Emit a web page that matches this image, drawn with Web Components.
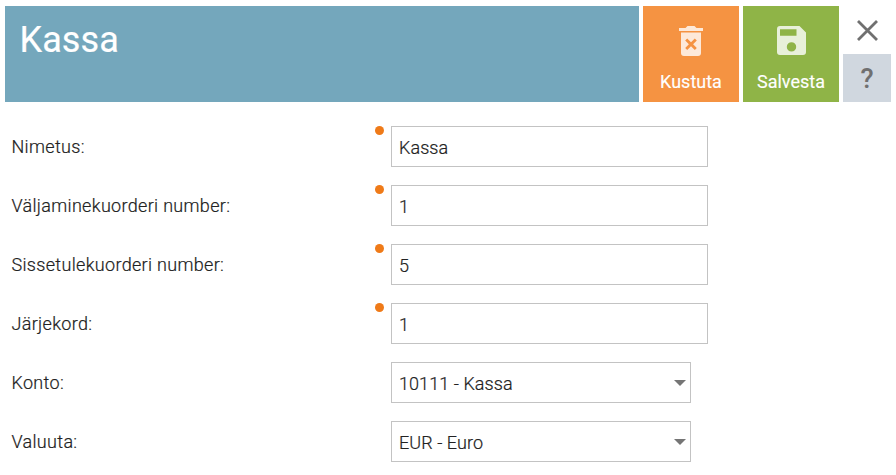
<!DOCTYPE html>
<html lang="et">
<head>
<meta charset="utf-8">
<title>Kassa</title>
<style>
  body {
    margin: 0;
    background: #fff;
    font-family: Roboto, "Liberation Sans", sans-serif;
  }
</style>
</head>
<body>
<cash-page>
  <page-header slot="header" heading="Kassa">
    <tool-button kind="delete">
      <svg slot="icon" width="24" height="30" viewBox="0 0 24 30">
        <path fill-rule="evenodd" fill="currentColor" d="M0 2H6.5L8.5 0H15.5L17.5 2H24V5H0ZM2 6.5H22V27Q22 30 19 30H5Q2 30 2 27ZM8.2 12.5L6.2 14.5L9.9 18.2L6.2 21.9L8.2 23.9L12 20.2L15.8 23.9L17.8 21.9L14.1 18.2L17.8 14.5L15.8 12.5L12 16.2Z"/>
      </svg>
      Kustuta
    </tool-button>
    <tool-button kind="save">
      <svg slot="icon" width="29" height="30" viewBox="0 0 29 30">
        <path fill-rule="evenodd" fill="currentColor" d="M3 0H22.5L29 6.5V26Q29 29 26 29H3Q0 29 0 26V3Q0 0 3 0ZM3 3.2V9.7H19.5V3.2ZM14.5 16.2A4.7 4.7 0 1 0 14.5 25.6A4.7 4.7 0 1 0 14.5 16.2Z"/>
      </svg>
      Salvesta
    </tool-button>
    <window-tools></window-tools>
  </page-header>
  <form-row label="Nimetus:" required><text-field value="Kassa"></text-field></form-row>
  <form-row label="Väljaminekuorderi number:" required><text-field value="1"></text-field></form-row>
  <form-row label="Sissetulekuorderi number:" required><text-field value="5"></text-field></form-row>
  <form-row label="Järjekord:" required><text-field value="1"></text-field></form-row>
  <form-row label="Konto:"><select-field value="10111 - Kassa"></select-field></form-row>
  <form-row label="Valuuta:"><select-field value="EUR - Euro"></select-field></form-row>
</cash-page>

<script>
(() => {
  class BaseElement extends HTMLElement {
    constructor() {
      super();
      this.attachShadow({ mode: 'open' });
    }

    connectedCallback() {
      this.shadowRoot.innerHTML = this.template();
    }
  }

  class CashPage extends BaseElement {
    template() {
      return `
        <style>
          :host { display: block; padding: 6px 5px 0; }
          main { display: flex; flex-direction: column; gap: 18px; padding: 24px 0 0 6.5px; }
        </style>
        <slot name="header"></slot>
        <main><slot></slot></main>
      `;
    }
  }

  class PageHeader extends BaseElement {
    template() {
      return `
        <style>
          :host { display: flex; gap: 4px; height: 96px; }
          h1 {
            flex: 1;
            box-sizing: border-box;
            margin: 0;
            padding: 13px 14.5px;
            background: #74a7bc;
            color: #fff;
            font-size: 36px;
            line-height: 42px;
            font-weight: 400;
            letter-spacing: 0.1px;
            -webkit-text-stroke: 0.2px #fff;
          }
        </style>
        <h1>${this.getAttribute('heading')}</h1>
        <slot></slot>
      `;
    }
  }

  class ToolButton extends BaseElement {
    template() {
      return `
        <style>
          :host { display: block; width: 96px; }
          :host([kind="delete"]) { background: #f59342; }
          :host([kind="save"]) { background: #8fb447; }
          button {
            display: flex;
            flex-direction: column;
            align-items: center;
            gap: 14px;
            width: 100%;
            height: 100%;
            padding: 20px 0 0;
            border: 0;
            background: none;
            color: #fff;
            font: 400 18px/24px Roboto, "Liberation Sans", sans-serif;
            -webkit-text-stroke: 0.15px #fff;
          }
          ::slotted(svg) { display: block; opacity: 0.8; }
        </style>
        <button><slot name="icon"></slot><span><slot></slot></span></button>
      `;
    }
  }

  class WindowTools extends BaseElement {
    template() {
      return `
        <style>
          :host { display: grid; grid-template-rows: 48px 48px; width: 48px; color: #707070; }
          div { display: flex; align-items: center; justify-content: center; }
          .help { background: #d0d7df; font-size: 27px; font-weight: 500; }
          .help span { padding-top: 2px; }
          svg { margin-left: 1px; margin-top: 1px; }
        </style>
        <div class="close">
          <svg width="22" height="22" viewBox="0 0 22 22">
            <path d="M1 1L20 20M20 1L1 20" fill="none" stroke="currentColor" stroke-width="2.8"/>
          </svg>
        </div>
        <div class="help"><span>?</span></div>
      `;
    }
  }

  class FormRow extends BaseElement {
    template() {
      return `
        <style>
          :host {
            display: grid;
            grid-template-columns: 363.5px 16px auto;
            justify-content: start;
            height: 41px;
            color: #222;
          }
          label {
            font-size: 18px;
            line-height: 41px;
            font-weight: 300;
            letter-spacing: 0.32px;
            -webkit-text-stroke: 0.2px #222;
          }
          .dot { width: 9px; height: 9px; border-radius: 50%; background: #ef7a18; }
        </style>
        <label>${this.getAttribute('label')}</label>
        <span>${this.hasAttribute('required') ? '<div class="dot"></div>' : ''}</span>
        <slot></slot>
      `;
    }
  }

  const fieldStyle = `
    :host {
      display: flex;
      align-items: center;
      box-sizing: border-box;
      height: 41px;
      padding: 2px 4px 0 7px;
      border: 1px solid #c3c3c3;
      background: #fff;
      color: #222;
      font-size: 18px;
      font-weight: 300;
      letter-spacing: 0.07px;
      -webkit-text-stroke: 0.2px #222;
    }
  `;

  class TextField extends BaseElement {
    template() {
      return `
        <style>${fieldStyle} :host { width: 317px; }</style>
        <span>${this.getAttribute('value')}</span>
      `;
    }
  }

  class SelectField extends BaseElement {
    template() {
      return `
        <style>
          ${fieldStyle}
          :host { width: 300px; justify-content: space-between; }
          svg { display: block; margin-bottom: 1px; }
        </style>
        <span>${this.getAttribute('value')}</span>
        <svg width="12" height="6" viewBox="0 0 12 6"><path d="M0 0H12L6 6Z" fill="#757575"/></svg>
      `;
    }
  }

  customElements.define('cash-page', CashPage);
  customElements.define('page-header', PageHeader);
  customElements.define('tool-button', ToolButton);
  customElements.define('window-tools', WindowTools);
  customElements.define('form-row', FormRow);
  customElements.define('text-field', TextField);
  customElements.define('select-field', SelectField);
})();
</script>
</body>
</html>
